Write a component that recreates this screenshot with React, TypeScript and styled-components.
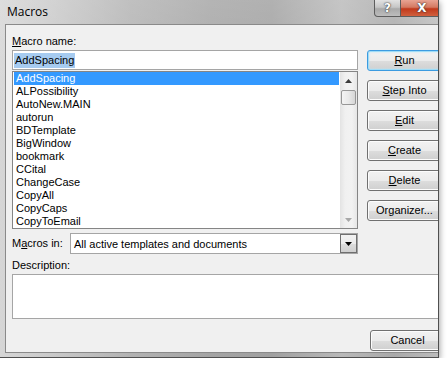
import * as React from 'react'
import styled, { createGlobalStyle, css } from 'styled-components'

const GlobalStyle = createGlobalStyle`
  html, body {
    margin: 0;
    padding: 0;
    background: #ffffff;
  }
  body {
    font-family: "Liberation Sans", Arial, sans-serif;
    font-size: 11px;
    color: #000;
  }
`

const macros = [
  'AddSpacing',
  'ALPossibility',
  'AutoNew.MAIN',
  'autorun',
  'BDTemplate',
  'BigWindow',
  'bookmark',
  'CCital',
  'ChangeCase',
  'CopyAll',
  'CopyCaps',
  'CopyToEmail',
]

const Window = styled.div`
  width: 439px;
  height: 358px;
  box-sizing: border-box;
  display: flex;
  flex-direction: column;
  overflow: hidden;
  border-right: 1px solid #4f4f4f;
  border-bottom: 1px solid #4f4f4f;
  background:
    linear-gradient(180deg, rgba(255, 255, 255, 0.18) 0%, rgba(255, 255, 255, 0) 40%),
    linear-gradient(90deg, #d6d6d6 0%, #c9c9c9 12%, #b2b2b2 30%, #a4a4a4 48%, #a0a0a0 62%, #b9b9b9 78%, #a9a9a9 90%, #bcbcbc 100%);
  box-shadow: 1px 2px 6px rgba(0, 0, 0, 0.35);
`

const TitleBar = styled.div`
  height: 24px;
  flex: none;
  display: flex;
  align-items: flex-start;
`

const Title = styled.div`
  font-family: "Open Sans", "Noto Sans", sans-serif;
  font-size: 12px;
  line-height: 24px;
  padding-left: 7px;
  color: #000;
`

const TitleButtons = styled.div`
  margin-left: auto;
  display: flex;
  margin-right: -6px;
`

const CaptionButton = styled.div<{ $close?: boolean }>`
  height: 17px;
  box-sizing: border-box;
  border: 1px solid #5d5d5d;
  border-top: none;
  display: flex;
  align-items: center;
  justify-content: center;
  font-family: "DejaVu Sans", sans-serif;
  font-weight: bold;
  font-size: 12px;
  color: #fff;
  text-shadow: 0 0 1px #333, 0 0 2px #333;
  ${(p) =>
    p.$close
      ? css`
          width: 43px;
          border-left: none;
          background: linear-gradient(180deg, #e8a493 0%, #d47a62 45%, #c1391b 55%, #d0603e 100%);
        `
      : css`
          width: 27px;
          border-bottom-left-radius: 4px;
          background: linear-gradient(180deg, #e2e2e2 0%, #c6c6c6 45%, #a9a9a9 55%, #bdbdbd 100%);
        `}
`

const Body = styled.div`
  flex: 1;
  margin: 0 0 4px 5px;
  border: 1px solid #8a8a8a;
  border-right: none;
  background: #f0f0f0;
  padding: 10px 0 0 6px;
  overflow: hidden;
  display: flex;
  flex-direction: column;
`

const MainRow = styled.div`
  display: flex;
  align-items: flex-start;
  gap: 9px;
`

const LeftColumn = styled.div`
  width: 346px;
  flex: none;
  display: flex;
  flex-direction: column;
`

const Label = styled.div`
  height: 13px;
  line-height: 13px;
  white-space: nowrap;
`

const Accel = styled.span`
  text-decoration: underline;
`

const NameInput = styled.div`
  margin-top: 2px;
  height: 20px;
  box-sizing: border-box;
  border: 1px solid #a5a5a5;
  background: #fff;
  padding: 1px 1px;
  display: flex;
  align-items: center;
`

const Selection = styled.span`
  background: #a6cbf0;
  line-height: 15px;
  padding: 0 1px;
`

const ListBox = styled.div`
  margin-top: 1px;
  height: 158px;
  box-sizing: border-box;
  border: 1px solid #858585;
  background: #fff;
  display: flex;
`

const Items = styled.div`
  flex: 1;
  padding: 0 1px;
  overflow: hidden;
`

const Item = styled.div<{ $selected?: boolean }>`
  height: 13px;
  line-height: 13px;
  padding-left: 2px;
  white-space: nowrap;
  background: ${(p) => (p.$selected ? '#3399ff' : 'transparent')};
  color: ${(p) => (p.$selected ? '#fff' : '#000')};
`

const ScrollBar = styled.div`
  width: 17px;
  flex: none;
  display: flex;
  flex-direction: column;
  background: linear-gradient(90deg, #e3e3e3 0%, #f0f0f0 30%, #f2f2f2 70%, #e6e6e6 100%);
`

const Arrow = styled.div`
  height: 17px;
  flex: none;
  display: flex;
  align-items: center;
  justify-content: center;
`

const Thumb = styled.div`
  margin: 1px 1px 0 1px;
  height: 15px;
  box-sizing: border-box;
  border: 1px solid #979797;
  border-radius: 2px;
  background: linear-gradient(90deg, #f4f4f4 0%, #e9e9e9 50%, #d6d6d6 100%);
`

const Track = styled.div`
  flex: 1;
`

const ComboRow = styled.div`
  margin-top: 4px;
  display: flex;
  align-items: center;
`

const ComboLabel = styled(Label)`
  width: 58px;
  flex: none;
`

const Combo = styled.div`
  flex: 1;
  height: 21px;
  box-sizing: border-box;
  border: 1px solid #a5a5a5;
  background: #fff;
  display: flex;
  align-items: center;
  padding-left: 3px;
`

const ComboText = styled.span`
  flex: 1;
  white-space: nowrap;
`

const DropButton = styled.div`
  width: 17px;
  height: 19px;
  box-sizing: border-box;
  border: 1px solid #6f6f6f;
  background: linear-gradient(180deg, #f2f2f2 0%, #ebebeb 50%, #dddddd 51%, #cfcfcf 100%);
  display: flex;
  align-items: center;
  justify-content: center;
`

const ButtonColumn = styled.div`
  padding-top: 15px;
  display: flex;
  flex-direction: column;
  gap: 9px;
`

const Button = styled.div<{ $default?: boolean }>`
  width: 75px;
  height: 21px;
  box-sizing: border-box;
  border: 1px solid ${(p) => (p.$default ? '#3c9be0' : '#707070')};
  border-radius: 3px;
  background: linear-gradient(180deg, #f2f2f2 0%, #ebebeb 50%, #dddddd 51%, #cfcfcf 100%);
  box-shadow: ${(p) =>
    p.$default ? 'inset 0 0 0 1px #9fdcf7, inset 0 0 2px 1px #b7e6fb' : 'inset 0 0 0 1px #fcfcfc'};
  display: flex;
  align-items: center;
  justify-content: center;
  white-space: nowrap;
  line-height: 13px;
  padding-bottom: 1px;
`

const DescLabel = styled(Label)`
  margin-top: 5px;
`

const DescBox = styled.div`
  margin-top: 2px;
  height: 45px;
  box-sizing: border-box;
  border: 1px solid #a5a5a5;
  border-right: none;
  background: #fff;
`

const Footer = styled.div`
  margin-top: 11px;
  margin-right: -7px;
  display: flex;
  justify-content: flex-end;
`

const Triangle = ({ dir, color }: { dir: 'up' | 'down'; color: string }) => (
  <svg width="7" height="4" viewBox="0 0 7 4">
    {dir === 'up' ? (
      <polygon points="3.5,0 7,4 0,4" fill={color} />
    ) : (
      <polygon points="0,0 7,0 3.5,4" fill={color} />
    )}
  </svg>
)

export default function App() {
  return (
    <>
      <GlobalStyle />
      <Window>
        <TitleBar>
          <Title>Macros</Title>
          <TitleButtons>
            <CaptionButton>?</CaptionButton>
            <CaptionButton $close>X</CaptionButton>
          </TitleButtons>
        </TitleBar>
        <Body>
          <MainRow>
            <LeftColumn>
              <Label>
                <Accel>M</Accel>acro name:
              </Label>
              <NameInput>
                <Selection>AddSpacing</Selection>
              </NameInput>
              <ListBox>
                <Items>
                  {macros.map((m, i) => (
                    <Item key={m} $selected={i === 0}>
                      {m}
                    </Item>
                  ))}
                </Items>
                <ScrollBar>
                  <Arrow>
                    <Triangle dir="up" color="#3a3a3a" />
                  </Arrow>
                  <Thumb />
                  <Track />
                  <Arrow>
                    <Triangle dir="down" color="#a8a8a8" />
                  </Arrow>
                </ScrollBar>
              </ListBox>
              <ComboRow>
                <ComboLabel>
                  M<Accel>a</Accel>cros in:
                </ComboLabel>
                <Combo>
                  <ComboText>All active templates and documents</ComboText>
                  <DropButton>
                    <Triangle dir="down" color="#000" />
                  </DropButton>
                </Combo>
              </ComboRow>
            </LeftColumn>
            <ButtonColumn>
              <Button $default>
                <Accel>R</Accel>un
              </Button>
              <Button>
                <Accel>S</Accel>tep Into
              </Button>
              <Button>
                <Accel>E</Accel>dit
              </Button>
              <Button>
                <Accel>C</Accel>reate
              </Button>
              <Button>
                <Accel>D</Accel>elete
              </Button>
              <Button>
                Or<Accel>g</Accel>anizer...
              </Button>
            </ButtonColumn>
          </MainRow>
          <DescLabel>Description:</DescLabel>
          <DescBox />
          <Footer>
            <Button>Cancel</Button>
          </Footer>
        </Body>
      </Window>
    </>
  )
}
